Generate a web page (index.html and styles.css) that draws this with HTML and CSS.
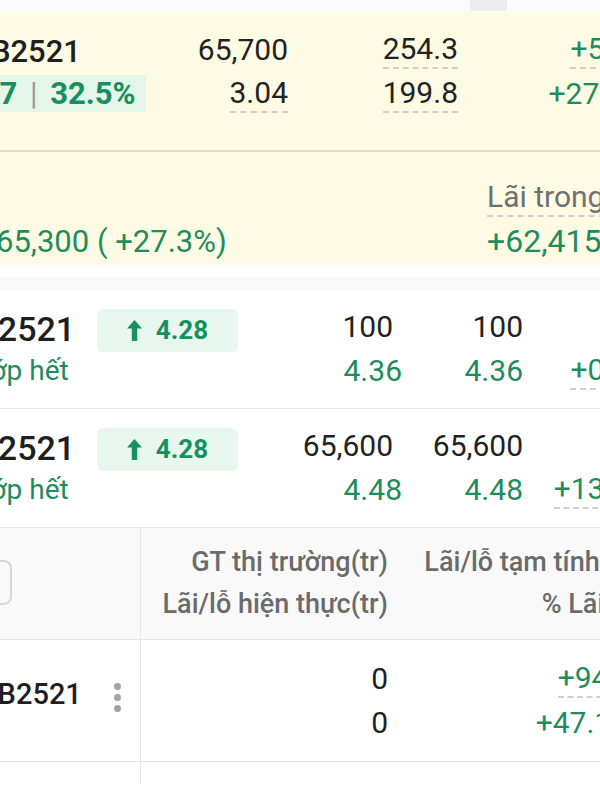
FILE: index.html
```html
<!DOCTYPE html>
<html>

<head>
    <title>Danh mục</title>

    <link rel="stylesheet" href="styles.css">
</head>

<body>
    <div class="page">
        <div class="strip"><span class="handle"></span></div>

        <section class="summary">
            <div class="sum-top">
                <div class="col s-name">
                    <div class="line ticker">CMBB2521</div>
                    <div class="line"><span class="pl-badge">+1.07 <span class="sep">|</span> 32.5%</span></div>
                </div>
                <div class="col num s-price">
                    <div class="line">65,700</div>
                    <div class="line"><span class="dash">3.04</span></div>
                </div>
                <div class="col num s-value">
                    <div class="line"><span class="dash">254.3</span></div>
                    <div class="line"><span class="dash">199.8</span></div>
                </div>
                <div class="col num s-pl up">
                    <div class="line"><span class="dash">+5.17</span></div>
                    <div class="line">+27.3%</div>
                </div>
            </div>
            <div class="sum-bottom">
                <div class="col s-cost">
                    <div class="line"></div>
                    <div class="line up">65,300 ( +27.3%)</div>
                </div>
                <div class="col s-today">
                    <div class="line label"><span class="dash">Lãi trong ngày</span></div>
                    <div class="line up">+62,415</div>
                </div>
            </div>
        </section>

        <div class="gap"></div>

        <div class="orders">
            <div class="order">
                <div class="col o-name">
                    <div class="line ticker">CMBB2521</div>
                    <div class="line status up">Đã khớp hết</div>
                </div>
                <div class="col o-badge">
                    <div class="line">
                        <span class="chip">
                            <svg width="15" height="21" viewBox="0 0 15 21"><path d="M7.5 0L15 8.5H10.2V21H4.8V8.5H0Z" fill="currentColor"/></svg>
                            4.28
                        </span>
                    </div>
                </div>
                <div class="col num o-qty">
                    <div class="line first">100</div>
                    <div class="line up">4.36</div>
                </div>
                <div class="col num o-done">
                    <div class="line">100</div>
                    <div class="line up">4.36</div>
                </div>
                <div class="col num o-pl up">
                    <div class="line"></div>
                    <div class="line"><span class="dash">+0.76</span></div>
                </div>
            </div>

            <div class="order">
                <div class="col o-name">
                    <div class="line ticker">CMBB2521</div>
                    <div class="line status up">Đã khớp hết</div>
                </div>
                <div class="col o-badge">
                    <div class="line">
                        <span class="chip">
                            <svg width="15" height="21" viewBox="0 0 15 21"><path d="M7.5 0L15 8.5H10.2V21H4.8V8.5H0Z" fill="currentColor"/></svg>
                            4.28
                        </span>
                    </div>
                </div>
                <div class="col num o-qty">
                    <div class="line first">65,600</div>
                    <div class="line up">4.48</div>
                </div>
                <div class="col num o-done">
                    <div class="line">65,600</div>
                    <div class="line up">4.48</div>
                </div>
                <div class="col num o-pl up">
                    <div class="line"></div>
                    <div class="line"><span class="dash">+13.44</span></div>
                </div>
            </div>
        </div>

        <div class="holdings">
            <div class="h-row h-head">
                <div class="h-cell h-first"><span class="search"></span></div>
                <div class="h-cell num h-mv">
                    <div class="line">GT thị trường(tr)</div>
                    <div class="line">Lãi/lỗ hiện thực(tr)</div>
                </div>
                <div class="h-cell num h-pl">
                    <div class="line">Lãi/lỗ tạm tính(tr)</div>
                    <div class="line">% Lãi/lỗ</div>
                </div>
            </div>

            <div class="h-row h-item">
                <div class="h-cell h-first">
                    <span class="ticker">CMBB2521</span>
                    <span class="kebab"><i></i><i></i><i></i></span>
                </div>
                <div class="h-cell num h-mv">
                    <div class="line">0</div>
                    <div class="line">0</div>
                </div>
                <div class="h-cell num h-pl up">
                    <div class="line"><span class="dash">+94.15</span></div>
                    <div class="line">+47.15%</div>
                </div>
            </div>

            <div class="h-row h-tail">
                <div class="h-cell h-first"></div>
            </div>
        </div>
    </div>
</body>

</html>
```

FILE: styles.css
```css
body {
    margin: 0;
    background-color: #ffffff;
    color: #222222;
    font-family: Roboto, "Noto Sans", sans-serif;
}

.page {
    width: 600px;
    overflow: hidden;
}

.strip {
    height: 12px;
    background-color: #fafafa;
}

.handle {
    display: block;
    width: 37px;
    height: 11px;
    margin-left: 470px;
    background-color: #ececec;
    border-radius: 0 0 3px 3px;
}

/* shared pieces */
.col {
    flex-shrink: 0;
}

.line {
    height: 44px;
    display: flex;
    align-items: center;
    white-space: nowrap;
    font-size: 30px;
}

.num .line {
    justify-content: flex-end;
}

.up {
    color: #1e8c5c;
}

.dash {
    line-height: 30px;
    padding-bottom: 3px;
    border-bottom: 2px dashed #cfcfcf;
    margin-bottom: -5px;
}

.ticker {
    font-weight: 500;
    color: #1f1f1f;
}

/* summary card */
.summary {
    background-color: #fefbe4;
}

.sum-top {
    display: flex;
    padding: 15px 0 35px;
    border-bottom: 2px solid #e0ddd0;
}

.s-name {
    width: 220px;
    margin-left: -70px;
}

.s-name .ticker {
    padding-top: 5px;
    height: 39px;
    margin-left: -6px;
    font-size: 31px;
}

.pl-badge {
    display: inline-block;
    padding: 0 10px 0 8px;
    line-height: 37px;
    font-size: 31px;
    font-weight: bold;
    color: #16905f;
    background-color: #e3f6e9;
}

.sep {
    font-weight: normal;
    color: #9a9a9a;
    margin: 0 5px;
}

.s-price {
    width: 138px;
}

.s-value {
    width: 170px;
}

.s-pl {
    width: 188px;
}

.sum-bottom {
    display: flex;
    padding: 23px 0 2px;
}

.s-cost {
    width: 491px;
    margin-left: -4px;
}

.s-cost .line {
    font-size: 31px;
}

.s-today .line {
    font-size: 32px;
}

.s-today .label {
    font-size: 30px;
    color: #707070;
}

.gap {
    height: 13px;
    border-top: 12px solid #ffffff;
    background-color: #f8f8f8;
}

/* order rows */
.order {
    display: flex;
    padding: 14px 0 16px;
    border-bottom: 1px solid #e8e8e8;
}

.o-name {
    width: 194px;
    margin-left: -97px;
}

.o-name .ticker {
    padding-top: 5px;
    height: 39px;
    font-size: 34px;
}

.status {
    padding-left: 17px;
    font-size: 28px;
}

.o-badge {
    width: 141px;
}

.chip {
    display: flex;
    align-items: center;
    justify-content: center;
    gap: 14px;
    width: 141px;
    height: 43px;
    margin-top: 8px;
    border-radius: 6px;
    background-color: #e7f7ed;
    color: #16905f;
    font-size: 26px;
    font-weight: bold;
}

.o-qty {
    width: 164px;
}

.o-qty .first {
    padding-right: 9px;
}

.o-done {
    width: 121px;
}

.o-pl {
    width: 123px;
}

/* holdings table */
.h-row {
    display: flex;
}

.h-cell {
    flex-shrink: 0;
}

.h-first {
    width: 140px;
    border-right: 1px solid #e6e6e6;
}

.h-head {
    height: 111px;
    background-color: #f9f9f9;
    border-bottom: 1px solid #e6e6e6;
}

.h-head .h-cell {
    padding-top: 13px;
}

.h-head .line {
    height: 42px;
    font-size: 27px;
    font-weight: 500;
    color: #6b6b6b;
}

.h-head .h-first {
    padding-top: 32px;
}

.search {
    display: block;
    width: 106px;
    height: 41px;
    margin-left: -98px;
    border: 2px solid #d6d6d6;
    border-radius: 8px;
}

.h-mv {
    width: 247px;
}

.h-pl {
    width: 262px;
}

.h-head .h-pl {
    width: 249px;
    padding-right: 13px;
}

.h-item {
    height: 121px;
    border-bottom: 1px solid #e6e6e6;
}

.h-item .h-cell {
    padding-top: 16px;
}

.h-item .h-first {
    display: flex;
    align-items: center;
    padding: 0 0 14px;
}

.h-first .ticker {
    margin-left: -65px;
    font-size: 29px;
}

.kebab {
    display: flex;
    flex-direction: column;
    gap: 4px;
    margin: 8px 0 0 32px;
}

.kebab i {
    width: 7px;
    height: 7px;
    border-radius: 50%;
    background-color: #a3a3a3;
}

.h-tail {
    height: 22px;
}
```
